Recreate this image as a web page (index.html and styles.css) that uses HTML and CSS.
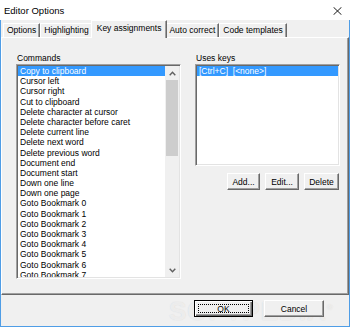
FILE: index.html
```html
<!DOCTYPE html>
<html>
<head>
<meta charset="utf-8">
<title>Editor Options</title>
<link rel="stylesheet" href="styles.css">
</head>
<body>
<div class="window">
  <div class="titlebar">
    <span class="title">Editor Options</span>
    <svg class="close" width="9" height="8" viewBox="0 0 9 8"><path d="M0.5 0.2L8.5 7.8M8.5 0.2L0.5 7.8" stroke="#1a1a1a" stroke-width="1" fill="none"/></svg>
  </div>
  <div class="frame">
    <div class="tabs">
      <div class="tab">Options</div>
      <div class="tab">Highlighting</div>
      <div class="tab active">Key assignments</div>
      <div class="tab">Auto correct</div>
      <div class="tab">Code templates</div>
    </div>
    <div class="page">
      <div class="col col-left">
        <div class="label">Commands</div>
        <div class="listbox commands">
          <div class="items">
            <div class="item sel">Copy to clipboard</div>
            <div class="item">Cursor left</div>
            <div class="item">Cursor right</div>
            <div class="item">Cut to clipboard</div>
            <div class="item">Delete character at cursor</div>
            <div class="item">Delete character before caret</div>
            <div class="item">Delete current line</div>
            <div class="item">Delete next word</div>
            <div class="item">Delete previous word</div>
            <div class="item">Document end</div>
            <div class="item">Document start</div>
            <div class="item">Down one line</div>
            <div class="item">Down one page</div>
            <div class="item">Goto Bookmark 0</div>
            <div class="item">Goto Bookmark 1</div>
            <div class="item">Goto Bookmark 2</div>
            <div class="item">Goto Bookmark 3</div>
            <div class="item">Goto Bookmark 4</div>
            <div class="item">Goto Bookmark 5</div>
            <div class="item">Goto Bookmark 6</div>
            <div class="item">Goto Bookmark 7</div>
          </div>
          <div class="scrollbar">
            <div class="arrow"><svg width="7" height="5" viewBox="0 0 7 5"><polyline points="0.7,4.2 3.5,1.2 6.3,4.2" fill="none" stroke="#606060" stroke-width="1.4"/></svg></div>
            <div class="track"><div class="thumb"></div></div>
            <div class="arrow"><svg width="7" height="5" viewBox="0 0 7 5"><polyline points="0.7,0.8 3.5,3.8 6.3,0.8" fill="none" stroke="#606060" stroke-width="1.4"/></svg></div>
          </div>
        </div>
      </div>
      <div class="col col-right">
        <div class="label">Uses keys</div>
        <div class="listbox keys">
          <div class="items">
            <div class="item sel">[Ctrl+C]  [&lt;none&gt;]</div>
          </div>
        </div>
        <div class="buttons">
          <button class="btn btn-add">Add...</button>
          <button class="btn btn-edit">Edit...</button>
          <button class="btn btn-delete">Delete</button>
        </div>
      </div>
    </div>
    <div class="footer">
      <span class="watermark">SOFTPEDIA<sup>®</sup></span>
      <button class="btn btn-ok default">OK</button>
      <button class="btn btn-cancel">Cancel</button>
    </div>
  </div>
</div>
</body>
</html>
```

FILE: styles.css
```css
* { box-sizing: border-box; }

html, body {
  margin: 0;
  padding: 0;
  background: #ffffff;
}

body {
  font-family: "Liberation Sans", Arial, sans-serif;
  font-size: 8.5px;
  color: #000000;
}

.window {
  width: 350px;
  height: 327px;
  display: flex;
  flex-direction: column;
}

.titlebar {
  height: 20px;
  flex: none;
  display: flex;
  align-items: center;
  justify-content: space-between;
  padding: 0 8px 0 4px;
  background: #ffffff;
}

.title {
  font-size: 9.5px;
  color: #000000;
}

.close { display: block; margin-top: 1px; }

.frame {
  flex: 1;
  display: flex;
  flex-direction: column;
  background: #f0f0f0;
  border: 1px solid #4f9de6;
  border-top: none;
}

.tabs {
  height: 17px;
  flex: none;
  display: flex;
  align-items: flex-end;
  padding-left: 2px;
}

.tab {
  height: 14px;
  padding: 0 3px 0 3px;
  line-height: 13px;
  white-space: nowrap;
  background: #f0f0f0;
  border-top: 1px solid #ffffff;
  border-left: 1px solid #ffffff;
  border-right: 1px solid #696969;
  box-shadow: inset -1px 0 #a0a0a0;
}

.tab.active {
  height: 18px;
  margin: 0 -2px -1px;
  padding: 0 5px;
  line-height: 14px;
  position: relative;
  z-index: 1;
}

.page {
  height: 258px;
  flex: none;
  display: flex;
  gap: 14px;
  padding: 14px 0 0 14px;
  border-top: 1px solid #ffffff;
  border-left: 1px solid #ffffff;
  border-right: 1px solid #696969;
  border-bottom: 1px solid #696969;
  box-shadow: inset -1px -1px #a0a0a0;
}

.col { display: flex; flex-direction: column; }
.col-left { width: 165px; }
.col-right { width: 145px; }

.label {
  height: 12px;
  line-height: 12px;
  padding-left: 1px;
}

.listbox {
  background: #ffffff;
  border: 1px solid;
  border-color: #a0a0a0 #ffffff #ffffff #a0a0a0;
  box-shadow: inset 1px 1px #696969, inset -1px -1px #e3e3e3;
  padding: 1px;
  display: flex;
  overflow: hidden;
}

.commands { height: 215px; }
.keys { height: 102px; }

.items {
  flex: 1;
  min-width: 0;
  overflow: hidden;
}

.item {
  height: 10.2px;
  line-height: 10.2px;
  padding-left: 2px;
  white-space: pre;
}

.item.sel {
  background: #3399ff;
  color: #ffffff;
}

.scrollbar {
  width: 14px;
  flex: none;
  display: flex;
  flex-direction: column;
  background: #f0f0f0;
}

.arrow {
  height: 14px;
  flex: none;
  display: flex;
  align-items: center;
  justify-content: center;
}

.track { flex: 1; padding: 0 1px; }

.thumb {
  height: 76px;
  background: #cdcdcd;
}

.buttons {
  display: flex;
  justify-content: flex-end;
  gap: 5px;
  margin-top: 7px;
  padding-right: 1px;
}

.btn {
  position: relative;
  z-index: 1;
  font-family: "Liberation Sans", Arial, sans-serif;
  font-size: 8.5px;
  color: #000000;
  height: 17px;
  padding: 0;
  margin: 0;
  background: #f0f0f0;
  border: 1px solid;
  border-color: #ffffff #696969 #696969 #ffffff;
  box-shadow: inset -1px -1px #a0a0a0;
}

.btn-add { width: 33px; }
.btn-edit { width: 34px; }
.btn-delete { width: 35px; }
.btn-ok { width: 59px; }
.btn-cancel { width: 60px; }

.btn.default {
  border: 1px solid #000000;
  box-shadow: inset 1px 1px #ffffff, inset -1px -1px #696969, inset -2px -2px #a0a0a0;
}

.btn.default::after {
  content: "";
  position: absolute;
  inset: 3px;
  border: 1px dotted #000000;
}

.footer {
  position: relative;
  flex: 1;
  display: flex;
  justify-content: flex-end;
  align-items: flex-start;
  gap: 11px;
  padding: 5px 25px 0 0;
}

.watermark {
  position: absolute;
  z-index: 0;
  left: 168px;
  top: 1px;
  font-size: 26px;
  font-weight: bold;
  letter-spacing: 1px;
  color: rgba(255, 255, 255, 0.6);
  text-shadow: 0 0 1px rgba(170, 170, 170, 0.45);
  pointer-events: none;
}

.watermark sup { font-size: 8px; }
```
